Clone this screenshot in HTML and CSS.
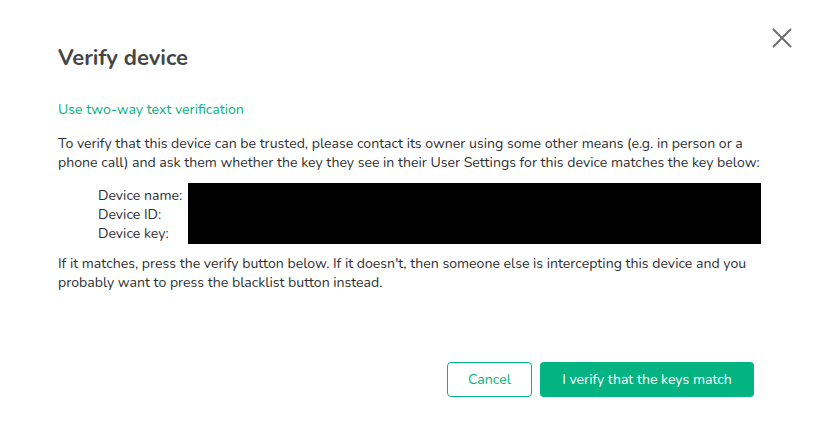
FILE: index.html
```html
<!DOCTYPE html>
<html lang="en">
<head>
    <meta charset="UTF-8">
    <title>Verify device</title>
    <link rel="stylesheet" href="styles.css">
</head>
<body>
    <div class="dialog">
        <button class="close" aria-label="Close">
            <svg width="22" height="22" viewBox="0 0 22 22">
                <path d="M2 2 L20 20 M20 2 L2 20" stroke="#6f6f6f" stroke-width="2" fill="none"/>
            </svg>
        </button>
        <h1 class="title">Verify device</h1>
        <a class="link" href="#">Use two-way text verification</a>
        <p class="text">To verify that this device can be trusted, please contact its owner using some other means (e.g. in person or a phone call) and ask them whether the key they see in their User Settings for this device matches the key below:</p>
        <div class="device">
            <div class="labels">
                <span>Device name:</span>
                <span>Device ID:</span>
                <span>Device key:</span>
            </div>
            <div class="redacted"></div>
        </div>
        <p class="text">If it matches, press the verify button below. If it doesn't, then someone else is intercepting this device and you probably want to press the blacklist button instead.</p>
        <div class="buttons">
            <button class="btn btn-cancel">Cancel</button>
            <button class="btn btn-primary">I verify that the keys match</button>
        </div>
    </div>
</body>
</html>
```
FILE: styles.css
```css
body {
    margin: 0;
    background: #fff;
    font-family: Nunito, Lato, "Open Sans", sans-serif;
    color: #2e2f32;
}

.dialog {
    position: relative;
    padding: 43px 58px 0 58px;
    width: 704px;
}

.close {
    position: absolute;
    top: 27px;
    right: 27px;
    background: none;
    border: none;
    padding: 0;
    cursor: pointer;
}

.close svg {
    display: block;
}

.title {
    margin: 0;
    font-size: 22px;
    font-weight: bold;
    line-height: 30px;
    color: #454545;
}

.link {
    display: block;
    margin-top: 27px;
    font-size: 14.1px;
    line-height: 20px;
    color: #03b381;
    text-decoration: none;
}

.text {
    margin: 14px 0 0 0;
    font-size: 14.1px;
    line-height: 19px;
}

.device {
    display: flex;
    margin-top: 11px;
    padding-left: 40px;
}

.labels {
    display: flex;
    flex-direction: column;
    width: 90px;
    padding-top: 3px;
    font-size: 14.1px;
    line-height: 19px;
}

.redacted {
    width: 573px;
    height: 61px;
    background: #000;
}

.device + .text {
    margin-top: 10px;
}

.buttons {
    display: flex;
    justify-content: flex-end;
    gap: 8px;
    margin-top: 70px;
    padding-right: 8px;
}

.btn {
    height: 35px;
    border-radius: 4px;
    font-family: inherit;
    font-size: 14.1px;
    cursor: pointer;
}

.btn-cancel {
    width: 85px;
    background: #fff;
    border: 1px solid #03b381;
    color: #03b381;
}

.btn-primary {
    width: 214px;
    background: #03b381;
    border: none;
    color: #fff;
}
```
